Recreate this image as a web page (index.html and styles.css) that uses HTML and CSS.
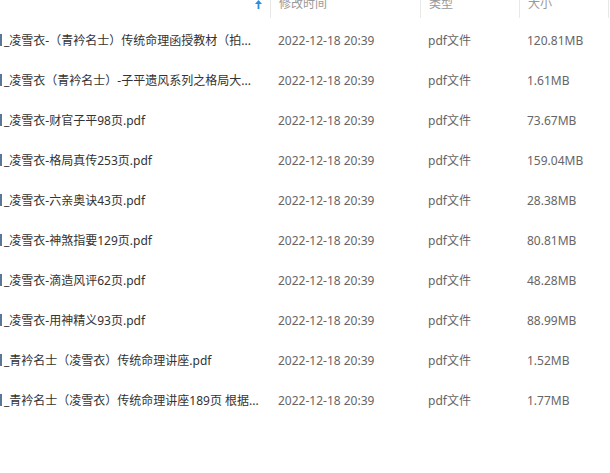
FILE: index.html
```html
<!DOCTYPE html>
<html lang="zh-CN">
<head>
    <meta charset="UTF-8">
    <title>文件列表</title>
    <link rel="stylesheet" href="styles.css">
</head>
<body>
    <div class="file-list">
        <div class="list-head">
            <div class="col col-name">
                <svg class="sort-arrow" width="7" height="9" viewBox="0 0 7 9"><path d="M3.5 0 L7 4 H4.4 V9 H2.6 V4 H0 Z" fill="#2b8de0"/></svg>
            </div>
            <div class="col col-date">修改时间</div>
            <div class="col col-type">类型</div>
            <div class="col col-size">大小</div>
            <div class="col col-end"></div>
        </div>

        <div class="row">
            <div class="col-name"><span class="icon-cut"></span>_凌雪衣-（青衿名士）传统命理函授教材（拍...</div>
            <div class="col-date">2022-12-18 20:39</div>
            <div class="col-type">pdf文件</div>
            <div class="col-size">120.81MB</div>
        </div>
        <div class="row">
            <div class="col-name"><span class="icon-cut"></span>_凌雪衣（青衿名士）-子平遗风系列之格局大...</div>
            <div class="col-date">2022-12-18 20:39</div>
            <div class="col-type">pdf文件</div>
            <div class="col-size">1.61MB</div>
        </div>
        <div class="row">
            <div class="col-name"><span class="icon-cut"></span>_凌雪衣-财官子平98页.pdf</div>
            <div class="col-date">2022-12-18 20:39</div>
            <div class="col-type">pdf文件</div>
            <div class="col-size">73.67MB</div>
        </div>
        <div class="row">
            <div class="col-name"><span class="icon-cut"></span>_凌雪衣-格局真传253页.pdf</div>
            <div class="col-date">2022-12-18 20:39</div>
            <div class="col-type">pdf文件</div>
            <div class="col-size">159.04MB</div>
        </div>
        <div class="row">
            <div class="col-name"><span class="icon-cut"></span>_凌雪衣-六亲奥诀43页.pdf</div>
            <div class="col-date">2022-12-18 20:39</div>
            <div class="col-type">pdf文件</div>
            <div class="col-size">28.38MB</div>
        </div>
        <div class="row">
            <div class="col-name"><span class="icon-cut"></span>_凌雪衣-神煞指要129页.pdf</div>
            <div class="col-date">2022-12-18 20:39</div>
            <div class="col-type">pdf文件</div>
            <div class="col-size">80.81MB</div>
        </div>
        <div class="row">
            <div class="col-name"><span class="icon-cut"></span>_凌雪衣-滴造风评62页.pdf</div>
            <div class="col-date">2022-12-18 20:39</div>
            <div class="col-type">pdf文件</div>
            <div class="col-size">48.28MB</div>
        </div>
        <div class="row">
            <div class="col-name"><span class="icon-cut"></span>_凌雪衣-用神精义93页.pdf</div>
            <div class="col-date">2022-12-18 20:39</div>
            <div class="col-type">pdf文件</div>
            <div class="col-size">88.99MB</div>
        </div>
        <div class="row">
            <div class="col-name"><span class="icon-cut"></span>_青衿名士（凌雪衣）传统命理讲座.pdf</div>
            <div class="col-date">2022-12-18 20:39</div>
            <div class="col-type">pdf文件</div>
            <div class="col-size">1.52MB</div>
        </div>
        <div class="row">
            <div class="col-name"><span class="icon-cut"></span>_青衿名士（凌雪衣）传统命理讲座189页 根据...</div>
            <div class="col-date">2022-12-18 20:39</div>
            <div class="col-type">pdf文件</div>
            <div class="col-size">1.77MB</div>
        </div>
    </div>
</body>
</html>
```

FILE: styles.css
```css
body, html {
    margin: 0;
    padding: 0;
    width: 100%;
    height: 100%;
    overflow: hidden;
    background: #fff;
    font-family: "Noto Sans", "Noto Sans CJK SC", sans-serif;
    font-size: 12px;
}
.file-list {
    width: 610px;
}
.list-head {
    display: grid;
    grid-template-columns: 270px 150px 99px 89px 2px;
    margin-top: -6px;
    padding-bottom: 2px;
    color: #999;
}
.list-head .col {
    height: 24px;
    line-height: 20px;
    box-sizing: border-box;
    padding-left: 8px;
    border-left: 1px solid #e8e8e8;
}
.list-head .col-name {
    border-left: none;
    display: flex;
    justify-content: flex-end;
    align-items: flex-start;
    padding-right: 8px;
    padding-top: 6px;
}
.sort-arrow {
    display: block;
}
.row {
    display: grid;
    grid-template-columns: 270px 150px 99px 91px;
    height: 40px;
    align-items: center;
    color: #666;
}
.row .col-name {
    color: #333;
    display: flex;
    align-items: center;
    white-space: nowrap;
    overflow: hidden;
}
.row .col-date,
.row .col-type,
.row .col-size {
    padding-left: 8px;
}
.icon-cut {
    display: inline-block;
    width: 2px;
    height: 12px;
    margin-right: 2px;
    background: #5a7896;
}
```
